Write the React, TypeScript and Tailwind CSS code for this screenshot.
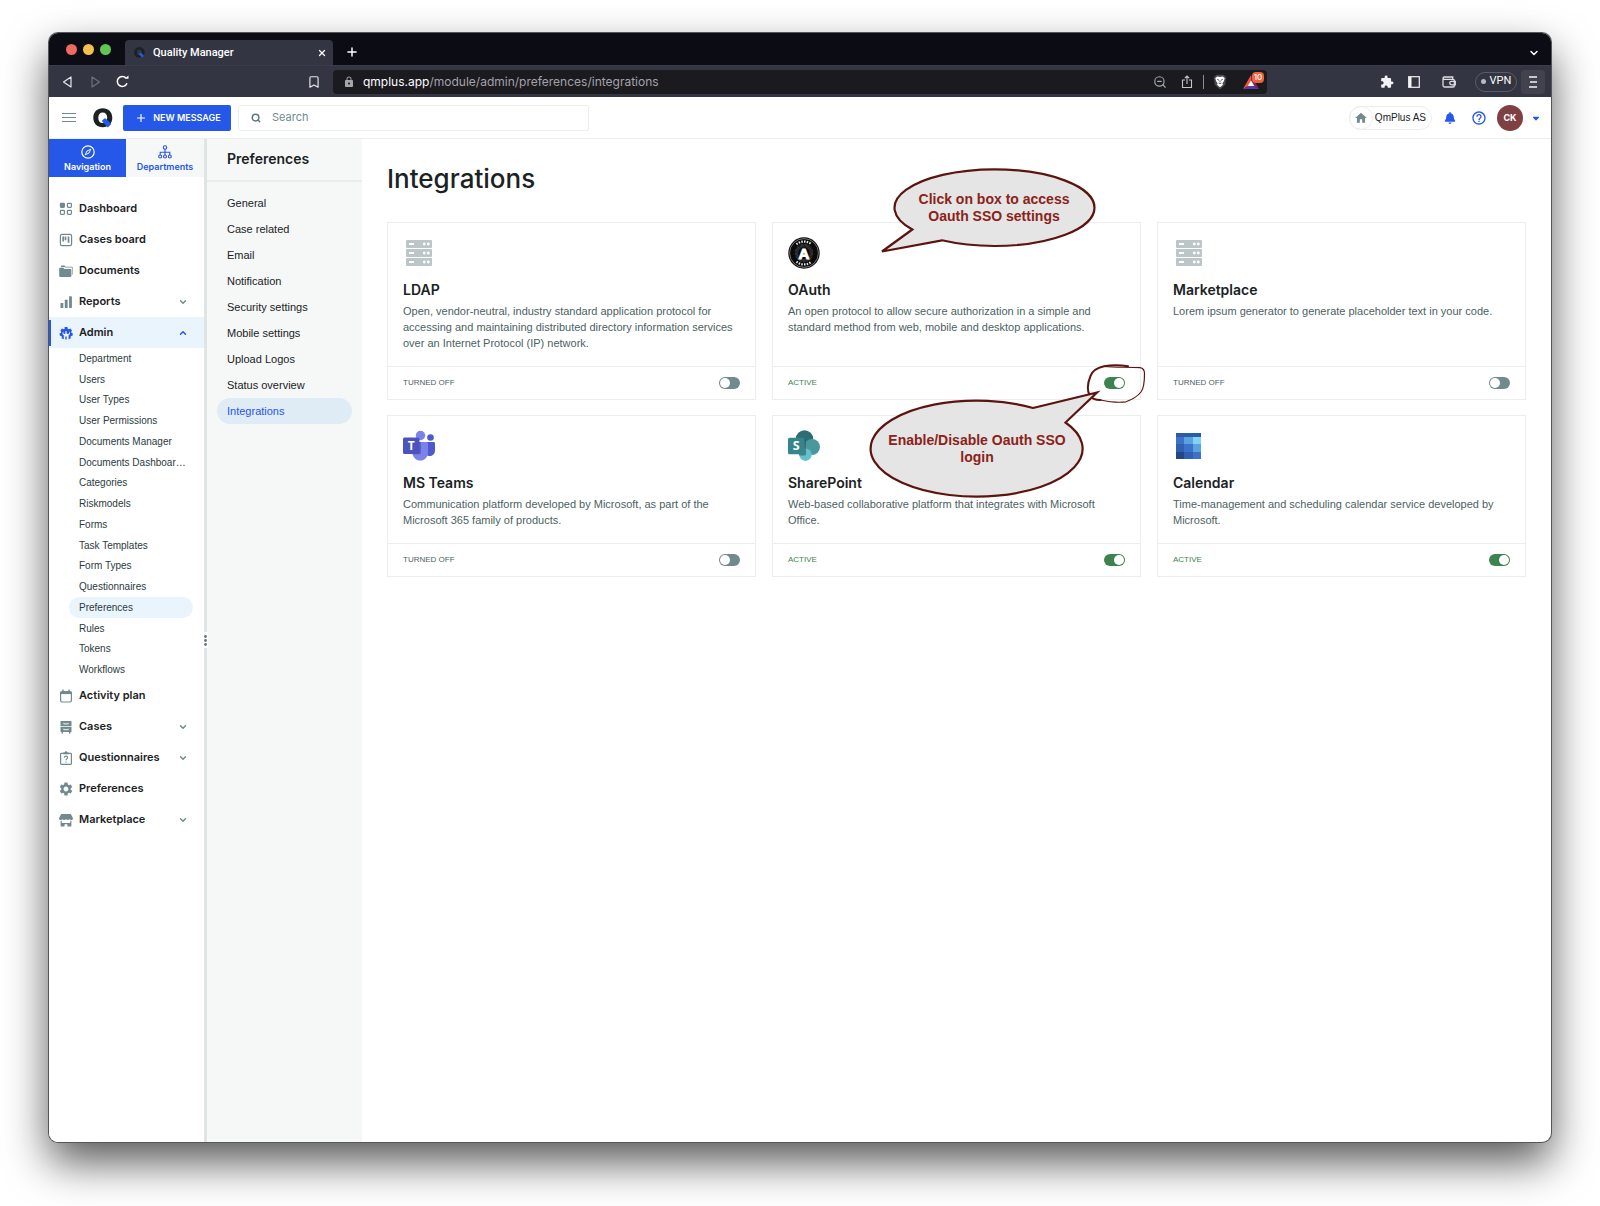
import React from 'react';
import { ChevronDown, ChevronUp, Plus, Search, X, ZoomOut, Bookmark } from 'lucide-react';
import { MdExtension, MdHome, MdSettings, MdHelpOutline, MdLock } from 'react-icons/md';
import { FaBell, FaCaretDown } from 'react-icons/fa6';

type IconName =
  | 'dashboard'
  | 'board'
  | 'documents'
  | 'reports'
  | 'admin'
  | 'calendar'
  | 'cases'
  | 'questionnaire'
  | 'settings'
  | 'market';

function NavIcon({ name }: { name: IconName }) {
  const box = 'size-3.5 shrink-0';
  switch (name) {
    case 'dashboard':
      return (
        <svg viewBox="0 0 14 14" className={box} fill="none" stroke="currentColor" strokeWidth="1.2">
          <rect x="1.4" y="1.4" width="4" height="4" rx="0.8" fill="currentColor" />
          <rect x="8.4" y="1.4" width="4" height="4" rx="0.8" />
          <rect x="1.4" y="8.4" width="4" height="4" rx="0.8" />
          <rect x="8.4" y="8.4" width="4" height="4" rx="0.8" />
        </svg>
      );
    case 'board':
      return (
        <svg viewBox="0 0 14 14" className={box} fill="none" stroke="currentColor" strokeWidth="1.2">
          <rect x="1.4" y="1.4" width="11.2" height="11.2" rx="1.6" />
          <path d="M4.2 3.6v5M6.5 3.6v3.6M9.5 3.6v6.2" strokeWidth="1.7" />
        </svg>
      );
    case 'documents':
      return (
        <svg viewBox="0 0 14 14" className={box} fill="currentColor">
          <path d="M2 3.2V2.4c0-.5.3-.8.8-.8h2.6l1.2 1.1h6.3c.5 0 .8.3.8.8v6.6c0 .4-.2.7-.6.8V4.6c0-.6-.4-1-1-1H6.3L5.2 2.9z" />
          <path d="M.2 4.6c0-.6.3-.9.9-.9h3.2l1.3 1.2h5.9c.6 0 .9.3.9.9v6.3c0 .5-.3.8-.9.8H1.1c-.6 0-.9-.3-.9-.8z" />
        </svg>
      );
    case 'reports':
      return (
        <svg viewBox="0 0 14 14" className={box} fill="currentColor">
          <rect x="1.5" y="8" width="2.8" height="5" rx="0.5" />
          <rect x="5.8" y="4.8" width="2.8" height="8.2" rx="0.5" />
          <rect x="10.1" y="1.2" width="2.8" height="11.8" rx="0.5" />
        </svg>
      );
    case 'admin':
      return (
        <svg viewBox="0 0 14 14" className={box} fill="currentColor">
          <path d="M5.6 1h2.8l.4 1.7 1 .5 1.6-.8 1.6 2-.8 1.4.2 1 1.5.7-.4 2.3-1.5.2-.5.9.4 1.4-2.3 1V9.2c.8-.4 1.3-1.1 1.3-2 0-.7-.4-1.3-.9-1.7v2L8.6 8.1 7.6 7.5V5.200a2.2 2.2 0 0 0-.6-.1 2.2 2.2 0 0 0-.6.1v2.3l-1 .6-1-.6v-2c-.5.4-.9 1-.9 1.7 0 .9.5 1.6 1.3 2v4.1l-2.300-1 .4-1.4-.5-.9-1.500-.2-.4-2.300 1.500-.7.2-1-.8-1.400 1.600-2 1.600.8 1-.5z" />
          <path d="M6.3 10.5h1.4v3H6.3z" />
        </svg>
      );
    case 'calendar':
      return (
        <svg viewBox="0 0 14 14" className={box} fill="none" stroke="currentColor" strokeWidth="1.2">
          <rect x="1.6" y="2.5" width="10.8" height="10.5" rx="1.4" />
          <path d="M1.6 4h10.8" strokeWidth="2.2" />
          <path d="M4 .6v2M10 .6v2" strokeWidth="1.4" />
        </svg>
      );
    case 'cases':
      return (
        <svg viewBox="0 0 14 14" className={box}>
          <path fill="currentColor" d="M1.5 1h11v5.2h-11zM1.5 7h11v5h-1v1.5H10V12H4v1.5H2.5V12h-1z" />
          <path d="M4.8 2.9v1h4.4v-1M4.8 8.7v1h4.4v-1" fill="none" stroke="#fff" strokeWidth="0.9" />
        </svg>
      );
    case 'questionnaire':
      return (
        <svg viewBox="0 0 14 14" className={box} fill="none" stroke="currentColor" strokeWidth="1.2">
          <rect x="1.6" y="2.3" width="10.8" height="11" rx="0.8" />
          <path d="M4.500 3V1.800h1.300a1.200 1.200 0 0 1 2.400 0h1.300V3z" fill="currentColor" strokeWidth="0.6" />
          <path d="M5.400 6.700c0-2 3.200-2 3.200 0 0 1.200-1.600 1.200-1.600 2.500M7 10.400v1.200" />
        </svg>
      );
    case 'settings':
      return <MdSettings className="-m-px size-4 shrink-0" />;
    case 'market':
      return (
        <svg viewBox="0 0 14 14" className={box} fill="currentColor">
          <path d="M2.200.9h9.600L13.900 5c.2 1.300-.6 2.100-1.700 2.100-.8 0-1.300-.3-1.700-.8-.4.500-.9.8-1.700.8S7.400 6.800 7 6.300c-.4.500-1 .8-1.800.8s-1.300-.3-1.700-.8c-.4.500-.9.8-1.700.8C.7 7.100-.1 6.300.1 5z" />
          <path d="M1.600 7.800h1.200v2.200h8.400V7.800h1.200v4.900c0 .6-.3.9-.9.9H8.400v-2.300H5.600v2.300H2.500c-.6 0-.9-.3-.9-.9z" />
        </svg>
      );
  }
}

function QLogo({ className }: { className: string }) {
  return (
    <svg viewBox="0 0 20 20" className={className} fill="none" aria-hidden="true">
      <path
        fillRule="evenodd"
        d="M9.700.3C15.300.3 19.300 4 19.300 9.800S15.300 19.300 9.700 19.300.3 15.600.3 9.800 4.200.3 9.700.3ZM9.700 4.500C6.900 4.500 5.300 6.500 5.300 9.800s1.600 5.300 4.400 5.300 4.500-2 4.500-5.300-1.700-5.300-4.500-5.300Z"
        fill="#1a2224"
      />
      <path d="M9.300 13.600v-1.200l1.900-1.800h1.600l5.500 5.400-3.500 3.600z" fill="#2557e8" />
    </svg>
  );
}

function BraveShield() {
  return (
    <svg viewBox="0 0 14 16" className="ml-2 h-4 w-3.5" aria-hidden="true">
      <path d="M3.600.8h6.800l2.800 2.400-1 7.600L7 15.400 1.800 10.800.8 3.200z" fill="#4b4c58" />
      <path d="M4.200 2.600 7 3l2.800-.4 1.900 1.700-.9 3-1.400 1.900.6 1.500L7 13.300 4 10.700l.6-1.500-1.400-1.900-.9-3z" fill="#fff" />
      <path d="M4.200 5.400 6 6.200M9.800 5.400 8 6.200M5.600 9 7 9.600 8.400 9M7 6.400v1.800" stroke="#4b4c58" strokeWidth="0.9" fill="none" />
    </svg>
  );
}

function ServerIcon() {
  return (
    <svg viewBox="0 0 32 32" className="size-8" aria-hidden="true">
      {[3, 12, 21].map((y) => (
        <g key={y}>
          <rect x="3" y={y} width="26" height="8" rx="1" fill="#bcc6c8" />
          <rect x="6" y={y + 3} width="5" height="2" fill="#fff" />
          <circle cx="21.3" cy={y + 4} r="1.4" fill="#fff" />
          <circle cx="25.3" cy={y + 4} r="1.4" fill="#fff" />
        </g>
      ))}
    </svg>
  );
}

function OAuthIcon() {
  return (
    <svg viewBox="0 0 32 32" className="size-8" aria-hidden="true">
      <circle cx="16" cy="16" r="15.7" fill="#0a0a0a" />
      <circle cx="16" cy="16" r="14.4" fill="none" stroke="#bdbdbd" strokeWidth="0.6" />
      <path d="M8.500 7.300A11.700 11.700 0 0 1 23.500 7.300" fill="none" stroke="#e4e4e4" strokeWidth="2.2" strokeDasharray="1.5 1.2" />
      <path d="M8.500 24.700A11.700 11.700 0 0 0 23.500 24.700" fill="none" stroke="#e4e4e4" strokeWidth="2.2" strokeDasharray="1.5 1.2" />
      <circle cx="16" cy="16" r="7.5" fill="none" stroke="#4a4a4a" strokeWidth="3.5" strokeDasharray="0.6 0.6" />
      <text x="16" y="21.8" textAnchor="middle" fontFamily="Liberation Sans" fontWeight="700" fontSize="15" fill="#fff" stroke="#fff" strokeWidth="1">
        A
      </text>
    </svg>
  );
}

function TeamsIcon() {
  return (
    <svg viewBox="0 0 32 32" className="size-8" aria-hidden="true">
      <circle cx="27.5" cy="7.5" r="3.3" fill="#5059c9" />
      <path d="M22 12h8.600c.8 0 1.400.6 1.400 1.400v7c0 3.200-2.500 5.600-5.500 5.600-2.600 0-4.500-1.500-4.500-4z" fill="#5059c9" />
      <circle cx="17.5" cy="5.5" r="4.7" fill="#7b83eb" />
      <path d="M10 12h13.500c.8 0 1.500.6 1.500 1.400v9.100c0 4.500-3.400 8.100-7.700 8.100S9.500 27 9.500 22.500z" fill="#7b83eb" />
      <path d="M10 12h8v10.500c0 1-.8 1.800-1.800 1.800H9.600z" fill="#5a62c3" />
      <rect x="0" y="7.5" width="16.5" height="16.5" rx="1.5" fill="#4b53bc" />
      <text x="8.3" y="20" textAnchor="middle" fontFamily="Open Sans" fontWeight="700" fontSize="12" fill="#fff">
        T
      </text>
    </svg>
  );
}

function SharePointIcon() {
  return (
    <svg viewBox="0 0 32 32" className="size-8" aria-hidden="true">
      <circle cx="16.5" cy="9" r="8.7" fill="#2c6e73" />
      <circle cx="24" cy="17" r="8" fill="#4a989e" />
      <circle cx="17.5" cy="24.7" r="6.2" fill="#62c0cb" />
      <path d="M9 9h8c.6 0 1 .4 1 1v14c0 .8-.5 1.400-1.400 1.400H11z" fill="#215c60" opacity="0.6" />
      <rect x="0" y="7.7" width="16.5" height="16.5" rx="1.5" fill="#37858a" />
      <text x="8.3" y="20.4" textAnchor="middle" fontFamily="Open Sans" fontWeight="700" fontSize="12.5" fill="#fff">
        S
      </text>
    </svg>
  );
}

function CalendarIcon() {
  const cells = [
    ['#3c73c8', '#5aa3df', '#80d3f8'],
    ['#3061b0', '#3c73c8', '#5aa3df'],
    ['#234886', '#3061b0', '#3c73c8'],
  ];
  return (
    <svg viewBox="0 0 32 32" className="size-8" shapeRendering="crispEdges" aria-hidden="true">
      <rect x="3" y="3" width="25" height="26" rx="1" fill="#2c5ba6" />
      {cells.map((row, r) =>
        row.map((c, i) => (
          <rect key={`${r}-${i}`} x={[3, 11, 20][i]} y={[7, 14, 22][r]} width={[8, 9, 8][i]} height={[7, 8, 7][r]} fill={c} />
        )),
      )}
    </svg>
  );
}

const mainNavTop: { label: string; icon: IconName; chevron?: boolean }[] = [
  { label: 'Dashboard', icon: 'dashboard' },
  { label: 'Cases board', icon: 'board' },
  { label: 'Documents', icon: 'documents' },
  { label: 'Reports', icon: 'reports', chevron: true },
];

const mainNavBottom: { label: string; icon: IconName; chevron?: boolean }[] = [
  { label: 'Activity plan', icon: 'calendar' },
  { label: 'Cases', icon: 'cases', chevron: true },
  { label: 'Questionnaires', icon: 'questionnaire', chevron: true },
  { label: 'Preferences', icon: 'settings' },
  { label: 'Marketplace', icon: 'market', chevron: true },
];

const adminItems = [
  'Department',
  'Users',
  'User Types',
  'User Permissions',
  'Documents Manager',
  'Documents Dashboar…',
  'Categories',
  'Riskmodels',
  'Forms',
  'Task Templates',
  'Form Types',
  'Questionnaires',
  'Preferences',
  'Rules',
  'Tokens',
  'Workflows',
];

const prefItems = [
  'General',
  'Case related',
  'Email',
  'Notification',
  'Security settings',
  'Mobile settings',
  'Upload Logos',
  'Status overview',
  'Integrations',
];

interface Integration {
  name: string;
  text: string;
  active: boolean;
  icon: React.ReactNode;
}

const integrations: Integration[] = [
  {
    name: 'LDAP',
    text: 'Open, vendor-neutral, industry standard application protocol for accessing and maintaining distributed directory information services over an Internet Protocol (IP) network.',
    active: false,
    icon: <ServerIcon />,
  },
  {
    name: 'OAuth',
    text: 'An open protocol to allow secure authorization in a simple and standard method from web, mobile and desktop applications.',
    active: true,
    icon: <OAuthIcon />,
  },
  {
    name: 'Marketplace',
    text: 'Lorem ipsum generator to generate placeholder text in your code.',
    active: false,
    icon: <ServerIcon />,
  },
  {
    name: 'MS Teams',
    text: 'Communication platform developed by Microsoft, as part of the Microsoft 365 family of products.',
    active: false,
    icon: <TeamsIcon />,
  },
  {
    name: 'SharePoint',
    text: 'Web-based collaborative platform that integrates with Microsoft Office.',
    active: true,
    icon: <SharePointIcon />,
  },
  {
    name: 'Calendar',
    text: 'Time-management and scheduling calendar service developed by Microsoft.',
    active: true,
    icon: <CalendarIcon />,
  },
];

function NavRow({ label, icon, chevron }: { label: string; icon: IconName; chevron?: boolean }) {
  return (
    <a href="#" className="flex h-[31px] items-center gap-1.5 pr-4 pl-2.5 text-[11px] font-semibold text-[#1a2224]">
      <span className="text-[#728a8e]">
        <NavIcon name={icon} />
      </span>
      <span className="flex-1">{label}</span>
      {chevron && <ChevronDown className="size-2.5 text-[#728a8e]" strokeWidth={3.5} />}
    </a>
  );
}

function Callouts() {
  return (
    <>
      <svg viewBox="0 0 60 42" className="pointer-events-none absolute top-[141px] left-[313px] z-10 h-[42px] w-[60px]" fill="none" stroke="#5c1410" strokeLinecap="round" aria-hidden="true">
        <path d="M42 2.200C34 1 24 1.200 18 2.200 10 4 6 7 4.500 12 2 18 1 26 3.500 31c2 3.500 6 5 11 5" strokeWidth="2" />
        <path d="M18 2.500c12 1 24 .5 36 1.200 3 .5 4.500 3 4.500 6C58.500 17 58 24 55 28c-4 5-10 8-15 9.800-8 1.200-16 .2-25.500-1.800" strokeWidth="1.2" />
      </svg>
      <div className="pointer-events-none absolute top-[-56px] left-[106px] z-20 h-[89px] w-[220px]">
        <svg viewBox="0 0 220 89" className="size-full" aria-hidden="true">
          <path
            d="M33.300 62.500 3 84.500 63 73.300A100 38.300 0 0 0 115.500 79 100 38.300 0 0 0 115.500 2.400 100 38.300 0 0 0 33.300 62.500Z"
            fill="#e5e5e5"
            stroke="#5c1410"
            strokeWidth="2.2"
          />
        </svg>
        <p className="absolute top-6 right-0 left-2.5 text-center font-['Liberation_Sans',sans-serif] text-[14px] leading-[17px] font-bold text-[#8b2218]">
          Click on box to access
          <br />
          Oauth SSO settings
        </p>
      </div>
      <div className="pointer-events-none absolute top-[165px] left-[94px] z-20 h-[113px] w-[236px]">
        <svg viewBox="0 0 236 113" className="size-full" aria-hidden="true">
          <path d="M166 20 230 4.500 198.500 34.500A106 48 0 1 1 166 20Z" fill="#e5e5e5" stroke="#5c1410" strokeWidth="2.2" />
        </svg>
        <p className="absolute top-11 right-8 left-4 text-center font-['Liberation_Sans',sans-serif] text-[14px] leading-[17px] font-bold whitespace-nowrap text-[#8b2218]">
          Enable/Disable Oauth SSO
          <br />
          login
        </p>
      </div>
    </>
  );
}

function Card({ item }: { item: Integration }) {
  return (
    <article className="relative flex flex-col border border-[#eceeee] bg-white">
      <div className="flex-1 px-[15px] pt-3.5 pb-[15px]">
        {item.icon}
        <h2 className="mt-3 text-[14px] leading-[18px] font-semibold text-[#1a2224]">{item.name}</h2>
        <p className="mt-1 font-['Liberation_Sans',sans-serif] text-[11px] leading-4 text-[#4c5f63]">{item.text}</p>
      </div>
      <label className="flex h-[33px] items-center justify-between border-t border-[#eceeee] px-[15px] font-['Liberation_Sans',sans-serif] text-[8px]">
        <span className={item.active ? 'text-[#3d8350]' : 'text-[#4c5f63]'}>{item.active ? 'ACTIVE' : 'TURNED OFF'}</span>
        <input
          type="checkbox"
          defaultChecked={item.active}
          aria-label={item.name}
          className="relative h-3 w-[21px] appearance-none rounded-full bg-[#728a8e] before:absolute before:top-px before:left-px before:size-2.5 before:rounded-full before:bg-white checked:bg-[#3d8350] checked:before:left-2.5"
        />
      </label>
      {item.name === 'OAuth' && <Callouts />}
    </article>
  );
}

function BrowserChrome() {
  return (
    <header className="text-white">
      <div className="flex h-8 items-end bg-[#0b0c14] pr-[11px] pl-[17px]">
        <div className="flex h-8 items-center gap-1.5">
          <button aria-label="Close window" className="size-[11px] rounded-full bg-[#ed6a5e]" />
          <button aria-label="Minimise window" className="size-[11px] rounded-full bg-[#f5bf4f]" />
          <button aria-label="Zoom window" className="size-[11px] rounded-full bg-[#61c554]" />
        </div>
        <div className="ml-[14px] flex h-[25px] w-52 items-center rounded-t-[4px] bg-[#333542] pr-1.5 pl-[9px]">
          <QLogo className="size-[11px]" />
          <span className="ml-2 flex-1 pt-px font-[Roboto,sans-serif] text-[11px] font-medium">Quality Manager</span>
          <button aria-label="Close tab">
            <X className="size-2.5" strokeWidth={3} />
          </button>
        </div>
        <button aria-label="New tab" className="mb-1.5 ml-3">
          <Plus className="size-3.5" strokeWidth={2.5} />
        </button>
        <button aria-label="Tab list" className="mb-1.5 ml-auto">
          <ChevronDown className="size-3" strokeWidth={3} />
        </button>
      </div>
      <div className="flex h-8 items-center border-t border-[#3b3d4a] bg-[#333542] pr-1.5 pl-[13px]">
        <button aria-label="Back">
          <svg viewBox="0 0 12 12" className="size-3" fill="none" stroke="#e8e8ec" strokeWidth="1.2" strokeLinejoin="round">
            <path d="M9 1v10L1.500 6z" />
          </svg>
        </button>
        <button aria-label="Forward" className="ml-[15px]">
          <svg viewBox="0 0 12 12" className="size-3" fill="none" stroke="#6f717c" strokeWidth="1.2" strokeLinejoin="round">
            <path d="M3 1v10l7.500-5z" />
          </svg>
        </button>
        <button aria-label="Reload" className="ml-[15px]">
          <svg viewBox="0 0 13 13" className="size-[13px]" fill="none" stroke="#fff" strokeWidth="1.5">
            <path d="M11 8.200A5 5 0 1 1 10 3" />
            <path d="M8.500 3.800h4V.6z" fill="#fff" stroke="none" />
          </svg>
        </button>
        <button aria-label="Bookmark this page" className="ml-[178px]">
          <Bookmark className="size-3.5 text-[#e8e8ec]" strokeWidth={2} />
        </button>
        <div className="ml-3 flex h-6 flex-1 items-center rounded-[4px] bg-[#1a1a1f] pr-2 pl-2.5">
          <MdLock className="size-3 text-[#a5a6ac]" />
          <span className="ml-2 flex-1 text-[12px] text-[#a3a4aa]">
            <span className="text-white">qmplus.app</span>/module/admin/preferences/integrations
          </span>
          <ZoomOut className="size-3.5 text-[#a5a6ac]" strokeWidth={2} />
          <svg viewBox="0 0 12 14" className="ml-[14px] h-3.5 w-3" fill="none" stroke="#c4c5ca" strokeWidth="1.1">
            <path d="M4 5H1.500v7.500h9V5H8M6 9V1M3.800 3.200 6 1l2.200 2.200" />
          </svg>
          <span className="ml-2.5 h-3.5 w-px bg-[#8b8c94]" />
          <span className="ml-px">
            <BraveShield />
          </span>
          <span className="relative ml-4 block">
            <svg viewBox="0 0 16 14" className="h-3.5 w-4">
              <path d="M8 0 0 14l8-4.600z" fill="#f2552c" />
              <path d="M8 0v9.400L16 14z" fill="#8a1e68" />
              <path d="M0 14h16L8 9.400z" fill="#5b3ba8" />
              <path d="M8 5.500 4.700 11h6.600z" fill="#fff" />
            </svg>
            <span className="absolute -top-[3px] left-[9px] flex h-[11px] w-3 items-center justify-center rounded-[4px] bg-[#f0623a] text-[8px] font-medium">10</span>
          </span>
        </div>
        <MdExtension className="ml-[113px] size-3.5 text-[#f2f2f5]" />
        <svg viewBox="0 0 12 12" className="ml-[14px] size-3" fill="none" stroke="#f2f2f5" strokeWidth="1.2">
          <rect x="0.7" y="0.7" width="10.6" height="10.6" />
          <path d="M2.200 1v10" strokeWidth="2.6" />
        </svg>
        <svg viewBox="0 0 14 12" className="ml-[22px] h-3 w-3.5" fill="none" stroke="#dddde3" strokeWidth="1.3">
          <path d="M1 2.500v7c0 .8.500 1.500 1.500 1.500h8.800c.6 0 1-.4 1-1V4.300c0-.6-.4-1-1-1H2.200C.6 3.200.8 1 2.200 1h8.500v2" />
          <path d="M13.300 5.300H9.500a1.600 1.600 0 0 0 0 3.600h3.800z" />
        </svg>
        <button className="ml-[19px] flex h-5 w-[42px] items-center justify-center gap-1 rounded-full border border-[#5a5c68] font-[Roboto,sans-serif] text-[11px]">
          <span className="size-[5px] rounded-full bg-[#b9bac2]" />
          VPN
        </button>
        <button aria-label="Menu" className="ml-1 flex size-6 items-center justify-center rounded-[4px] bg-[#40424e]">
          <svg viewBox="0 0 10 12" className="h-3 w-2.5" stroke="#f2f2f5" strokeWidth="1.3">
            <path d="M1 1h8M2 6h7M1 11h8" />
          </svg>
        </button>
      </div>
    </header>
  );
}

function AppHeader() {
  return (
    <div className="flex h-[42px] items-center border-b border-[#eceeee] bg-white pr-2.5 pl-[13px]">
      <button aria-label="Toggle menu">
        <svg viewBox="0 0 14 9" className="h-[9px] w-3.5" stroke="#728a8e" strokeWidth="1">
          <path d="M0 .5h14M0 4.500h14M0 8.500h14" />
        </svg>
      </button>
      <a href="#" aria-label="Home" className="ml-[17px]">
        <QLogo className="size-5" />
      </a>
      <button className="ml-2.5 flex h-[26px] w-[108px] items-center justify-center gap-1.5 rounded-[2px] bg-[#2557e8] pl-0.5 text-[9px] font-semibold whitespace-nowrap text-white">
        <Plus className="size-3" strokeWidth={2.2} />
        NEW MESSAGE
      </button>
      <div className="ml-[7px] flex h-[26px] w-[351px] items-center gap-[11px] rounded-[2px] border border-[#eceeee] pl-3">
        <Search className="size-2.5 text-[#5f777b]" strokeWidth={3.5} />
        <input type="search" aria-label="Search" placeholder="Search" className="flex-1 bg-transparent text-[11px] outline-none placeholder:text-[#728a8e]" />
      </div>
      <button className="ml-auto flex h-6 items-center gap-0.5 rounded-full border border-[#eceeee] pr-[5px] font-['Liberation_Sans',sans-serif] text-[10px] text-[#1a2224]">
        <span className="-my-px -ml-px flex size-6 items-center justify-center rounded-full border border-[#eceeee]">
          <MdHome className="size-3.5 text-[#728a8e]" />
        </span>
        QmPlus AS
      </button>
      <button aria-label="Notifications" className="ml-3 text-[#2557e8]">
        <FaBell className="size-3" />
      </button>
      <button aria-label="Help" className="ml-[15px] text-[#2557e8]">
        <MdHelpOutline className="size-4" />
      </button>
      <button aria-label="Account" className="ml-2.5 flex items-center gap-2">
        <span className="flex size-[26px] items-center justify-center rounded-full bg-[#7f4041] text-[9px] font-bold text-white">CK</span>
        <FaCaretDown className="size-2.5 text-[#2557e8]" />
      </button>
    </div>
  );
}

function Sidebar() {
  return (
    <nav className="w-[155px] shrink-0 bg-white" aria-label="Main">
      <div className="flex h-[38px] text-[9px] leading-3 font-semibold">
        <button className="flex w-[77px] flex-col items-center justify-center gap-0.5 bg-[#2557e8] pt-0.5 text-white">
          <svg viewBox="0 0 14 14" className="size-3.5" fill="none" stroke="currentColor" strokeWidth="1.2">
            <circle cx="7" cy="7" r="6.2" />
            <path d="M9.800 4.200 8 8l-3.800 1.800L6 6z" strokeWidth="1" />
          </svg>
          Navigation
        </button>
        <button className="flex flex-1 flex-col items-center justify-center gap-0.5 bg-[#f6f8f8] pt-0.5 text-[#2557e8]">
          <svg viewBox="0 0 14 14" className="size-3.5" fill="none" stroke="currentColor" strokeWidth="1.1">
            <circle cx="7" cy="2.5" r="1.7" />
            <circle cx="2.2" cy="11.5" r="1.5" />
            <circle cx="7" cy="11.5" r="1.5" />
            <circle cx="11.8" cy="11.5" r="1.5" />
            <path d="M7 4.200V10M2.200 10V7.200h9.600V10" />
          </svg>
          Departments
        </button>
      </div>
      <div className="pt-4">
        {mainNavTop.map((n) => (
          <NavRow key={n.label} {...n} />
        ))}
        <a
          href="#"
          aria-current="true"
          className="relative flex h-[31px] items-center gap-1.5 bg-[#eaf4fd] pr-4 pl-2.5 text-[11px] font-semibold text-[#1a2224] before:absolute before:top-[3px] before:bottom-0.5 before:left-0 before:w-0.5 before:bg-[#2557e8]"
        >
          <span className="text-[#2557e8]">
            <NavIcon name="admin" />
          </span>
          <span className="flex-1">Admin</span>
          <ChevronUp className="size-2.5 text-[#2557e8]" strokeWidth={3.5} />
        </a>
        <ul className="grid min-h-[332px] auto-rows-fr pr-[11px] pl-5 font-['Liberation_Sans',sans-serif] text-[10px] text-[#2c3a3d]">
          {adminItems.map((label) => (
            <li key={label} className="flex">
              <a href="#" className={label === 'Preferences' ? 'flex flex-1 items-center rounded-full bg-[#eaf4fd] pl-2.5' : 'flex flex-1 items-center pl-2.5'}>
                {label}
              </a>
            </li>
          ))}
        </ul>
        {mainNavBottom.map((n) => (
          <NavRow key={n.label} {...n} />
        ))}
      </div>
    </nav>
  );
}

export default function App() {
  return (
    <div className="flex min-h-screen bg-white px-[49px] pt-[33px] pb-16 font-['Inter',sans-serif]">
      <div className="flex flex-1 flex-col overflow-hidden rounded-[9px] bg-white shadow-[0_0_0_1px_#55565a,0_20px_44px_rgba(0,0,0,0.66)]">
        <BrowserChrome />
        <AppHeader />
        <div className="flex flex-1">
          <Sidebar />
          <div className="relative w-[3px] shrink-0 bg-[#dfe4e5]">
            <button aria-label="Resize sidebar" className="absolute top-[493px] -left-px flex h-4 w-[5px] items-center justify-center bg-white">
              <svg viewBox="0 0 3 11" className="h-[11px] w-[3px]" fill="#5f777b">
                <circle cx="1.5" cy="1.5" r="1.4" />
                <circle cx="1.5" cy="5.5" r="1.4" />
                <circle cx="1.5" cy="9.5" r="1.4" />
              </svg>
            </button>
          </div>
          <nav className="w-[155px] shrink-0 bg-[#f6f8f8]" aria-label="Preferences">
            <h2 className="flex h-[43px] items-center border-b-2 border-[#eaeded] pb-0.5 pl-5 text-[14px] font-semibold text-[#1a2224]">Preferences</h2>
            <ul className="px-2.5 pt-2 font-['Liberation_Sans',sans-serif] text-[11px] text-[#1a2224]">
              {prefItems.map((label) => (
                <li key={label}>
                  <a
                    href="#"
                    className={
                      label === 'Integrations'
                        ? 'flex h-[26px] items-center rounded-full bg-[#dfebf5] pl-2.5 text-[#2557e8]'
                        : 'flex h-[26px] items-center pl-2.5'
                    }
                  >
                    {label}
                  </a>
                </li>
              ))}
            </ul>
          </nav>
          <main className="flex-1 px-[25px] pt-6">
            <h1 className="text-[26px] leading-8 font-medium text-[#1a2224]">Integrations</h1>
            <div className="mt-[27px] grid grid-cols-3 gap-x-4 gap-y-[15px]">
              {integrations.map((item) => (
                <Card key={item.name} item={item} />
              ))}
            </div>
          </main>
        </div>
      </div>
    </div>
  );
}
